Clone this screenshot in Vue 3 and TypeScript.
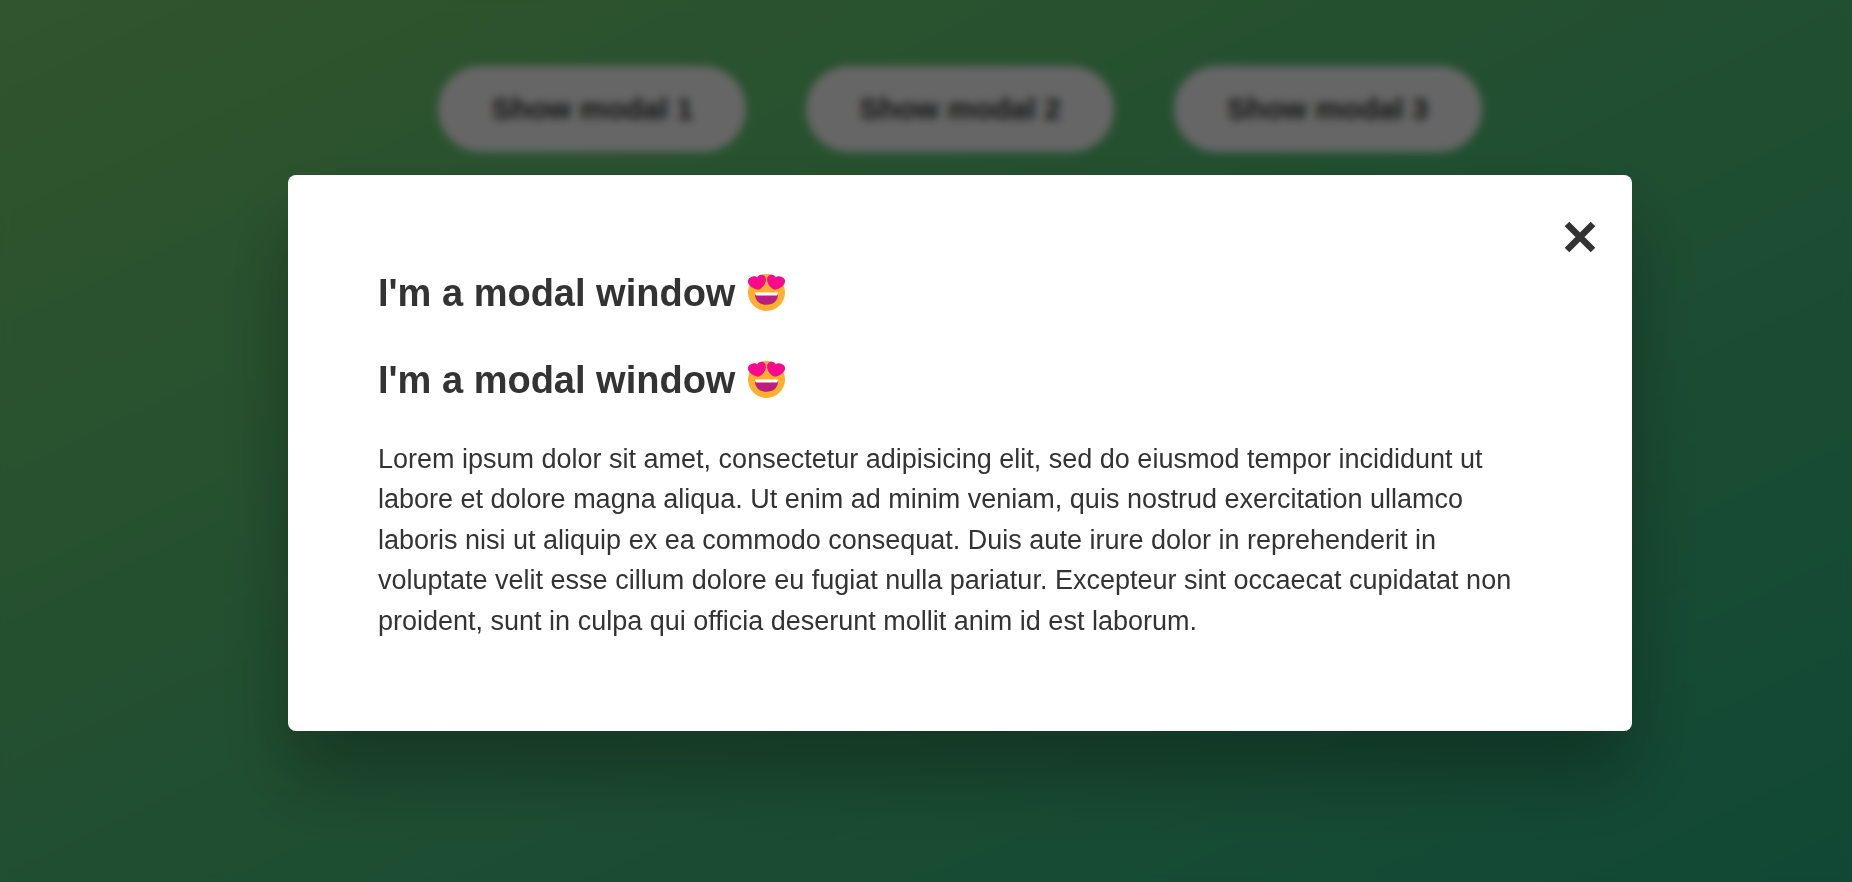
<script setup lang="ts">
import { ref } from 'vue'

const buttons: string[] = ['Show modal 1', 'Show modal 2', 'Show modal 3']
const titles: string[] = ["I'm a modal window", "I'm a modal window"]
const open = ref(true)
</script>

<template>
  <div class="page">
    <main class="launchers">
      <button v-for="label in buttons" :key="label" type="button" class="show-modal" @click="open = true">
        {{ label }}
      </button>
    </main>

    <div v-if="open" class="overlay">
      <section class="modal" role="dialog" aria-modal="true" aria-label="Modal window">
        <button type="button" class="close-modal" aria-label="Close" @click="open = false">
          <svg viewBox="0 0 32 32" aria-hidden="true">
            <path d="M3 3L29 29M29 3L3 29" fill="none" stroke="#333" stroke-width="6.500" />
          </svg>
        </button>
        <h1 v-for="(title, i) in titles" :key="i">
          {{ title }}
          <svg class="emoji" viewBox="0 0 36 36" role="img" aria-label="Heart eyes">
            <circle cx="18" cy="18" r="18" fill="#ffb02e" />
            <path fill="#bb1d80" d="M6.800 20H29.200C29 26 24.800 30 18 30S7 26 6.800 20Z" />
            <path fill="#fff" d="M7 18H29Q29 21 27.500 21H8.500Q7 21 7 18Z" />
            <path
              fill="#f70a8d"
              d="M4.500 2.500C6.700 1.800 8.200 2.500 9 3.600C9.800 1.500 12 .2 14.200 .8C17 1.600 17.900 4.500 17.100 7.600C16.200 11.300 13.200 14 10.200 15.300C6.500 14.600 2.200 12.700 .4 9.200C-1 6.200 .8 3.200 4.500 2.500Z"
            />
            <path
              fill="#f70a8d"
              d="M31.500 2.500C29.300 1.800 27.800 2.500 27 3.600C26.200 1.500 24 .2 21.800 .8C19 1.600 18.100 4.500 18.900 7.600C19.800 11.300 22.800 14 25.800 15.300C29.500 14.600 33.800 12.700 35.600 9.200C37 6.200 35.200 3.200 31.500 2.500Z"
            />
          </svg>
        </h1>
        <p>
          Lorem ipsum dolor sit amet, consectetur adipisicing elit, sed do eiusmod tempor incididunt ut
          labore et dolore magna aliqua. Ut enim ad minim veniam, quis nostrud exercitation ullamco
          laboris nisi ut aliquip ex ea commodo consequat. Duis aute irure dolor in reprehenderit in
          voluptate velit esse cillum dolore eu fugiat nulla pariatur. Excepteur sint occaecat cupidatat
          non proident, sunt in culpa qui officia deserunt mollit anim id est laborum.
        </p>
      </section>
    </div>
  </div>
</template>

<style>
body {
  margin: 0;
}
</style>

<style scoped>
.page {
  box-sizing: border-box;
  min-height: 100vh;
  padding: 66px 0 0 68px;
  color: #333;
  font-family: 'Liberation Sans', Arial, sans-serif;
  line-height: 1.5;
  background: linear-gradient(to top left, #28b487, #7dd56f) left bottom / calc(100% + 68px) calc(100% + 24px)
    no-repeat;
}

.launchers {
  display: flex;
  justify-content: center;
  gap: 60px;
}

.show-modal {
  padding: 26px 53px;
  border: 0;
  border-radius: 150px;
  background: #fff;
  color: #333;
  font: bold 30px 'Liberation Sans', Arial, sans-serif;
  cursor: pointer;
}

.overlay {
  position: fixed;
  inset: 0;
  box-sizing: border-box;
  display: flex;
  align-items: center;
  padding: 24px 220px 0 288px;
  background: rgba(0, 0, 0, 0.6);
  backdrop-filter: blur(4px);
}

.modal {
  position: relative;
  flex: 1;
  padding: 90px;
  border-radius: 8px;
  background: #fff;
  box-shadow: 0 45px 75px rgba(0, 0, 0, 0.3);
}

.close-modal {
  position: absolute;
  top: 40px;
  right: 30px;
  display: flex;
  padding: 6px;
  border: 0;
  background: none;
  cursor: pointer;
}

.close-modal svg {
  width: 32px;
  height: 32px;
}

h1 {
  margin: 0 0 30px;
  font-size: 38px;
  line-height: 57px;
}

.emoji {
  width: 37px;
  height: 37px;
  margin-left: 2px;
  vertical-align: -5px;
  overflow: visible;
}

p {
  margin: 0;
  font-size: 27px;
}
</style>
